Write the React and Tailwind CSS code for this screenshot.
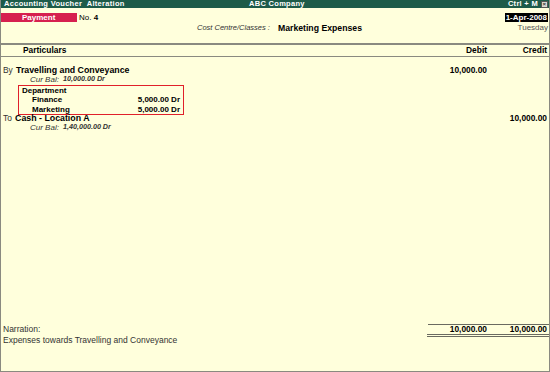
export default function App() {
  const f = { fontFamily: '"Liberation Sans", Arial, sans-serif' };
  return (
    <div style={f} className="w-[550px] h-[372px] bg-[#ffffdc] flex flex-col text-black overflow-hidden border-l border-r border-b border-[#8a8a80]">
      {/* Title bar */}
      <div className="h-[8px] bg-[#1d5b49] flex items-center text-white text-[7.5px] font-bold leading-none tracking-[0.3px] pl-[3px] pr-[1px]">
        <div className="w-[245px]">Accounting Voucher&nbsp; Alteration</div>
        <div className="flex-1">ABC Company</div>
        <div className="mr-[3px]">Ctrl + M</div>
        <div className="w-[7px] h-[7px] bg-[#d8d8d0] border border-[#555] flex items-center justify-center text-[#333] text-[6px] leading-none">×</div>
      </div>
      {/* Header */}
      <div className="flex justify-between mt-[5px] h-[9px]">
        <div className="flex items-center">
          <div className="w-[76px] h-[9px] bg-[#d6204f] text-white text-[8px] font-bold leading-[9px] pl-[21px]">Payment</div>
          <div className="text-[8px] leading-[9px] ml-[2px]">No. <span className="font-bold">4</span></div>
        </div>
        <div className="bg-black text-white text-[8px] font-bold leading-[9px] px-[1px] mr-[1px]">1-Apr-2008</div>
      </div>
      <div className="flex h-[10px] mt-[1px] items-center">
        <div className="w-[196px]" />
        <div className="text-[7.5px] leading-[10px] italic text-[#333]">Cost Centre/Classes :</div>
        <div className="text-[8.7px] leading-[10px] font-bold ml-[8px]">Marketing Expenses</div>
        <div className="flex-1" />
        <div className="text-[8px] leading-[10px] text-[#555] mr-[1px]">Tuesday</div>
      </div>
      {/* header lines */}
      <div className="mt-[10px] h-[2px] bg-[#8a8a80]" />
      <div className="flex h-[11px] items-center text-[8.4px] font-bold">
        <div className="pl-[22px] flex-1">Particulars</div>
        <div className="w-[60px] text-right">Debit</div>
        <div className="w-[62px] text-right pr-[2px]">Credit</div>
      </div>
      <div className="h-[1px] bg-[#8a8a80]" />
      {/* Entries */}
      <div className="mt-[9px] flex flex-col text-[8px]">
        <div className="flex h-[9px] items-center">
          <div className="flex-1 pl-[2px]"><span className="text-[#333] text-[8.4px]">By</span> <span className="font-bold ml-[1px] text-[8.8px]">Travelling and Conveyance</span></div>
          <div className="w-[60px] text-right font-bold text-[8.4px]">10,000.00</div>
          <div className="w-[62px]" />
        </div>
        <div className="flex h-[9px] items-center italic text-[#333] pl-[29px]">
          Cur Bal:<span className="font-bold ml-[4px] text-[7.2px]">10,000.00 Dr</span>
        </div>
        <div className="ml-[17px] mt-[1px] w-[166px] border border-[#e0202a] px-[3px] font-bold">
          <div className="h-[9px] leading-[9px]">Department</div>
          <div className="flex h-[9.5px] leading-[9.5px] pl-[10px]"><div className="flex-1">Finance</div><div>5,000.00 Dr</div></div>
          <div className="flex h-[9.5px] leading-[9.5px] pl-[10px]"><div className="flex-1">Marketing</div><div>5,000.00 Dr</div></div>
        </div>
        <div className="flex h-[9px] items-center -mt-[1px]">
          <div className="flex-1 pl-[2px]"><span className="text-[#333] text-[8.4px]">To</span> <span className="font-bold ml-[1px] text-[8.8px]">Cash - Location A</span></div>
          <div className="w-[60px]" />
          <div className="w-[62px] text-right font-bold pr-[2px] text-[8.4px]">10,000.00</div>
        </div>
        <div className="flex h-[9px] items-center italic text-[#333] pl-[29px]">
          Cur Bal:<span className="font-bold ml-[4px] text-[7.2px]">1,40,000.00 Dr</span>
        </div>
      </div>
      <div className="flex-1" />
      {/* Footer */}
      <div className="flex flex-col mb-[26px] text-[8.5px]">
        <div className="flex">
          <div className="flex-1" />
          <div className="w-[121px] h-[1px] bg-[#6a6a60]" />
        </div>
        <div className="flex h-[9px] items-center">
          <div className="flex-1 pl-[2px] text-[#333]">Narration:</div>
          <div className="w-[60px] text-right font-bold text-[8.4px]">10,000.00</div>
          <div className="w-[62px] text-right font-bold pr-[2px] text-[8.4px]">10,000.00</div>
        </div>
        <div className="flex">
          <div className="flex-1 pl-[2px] text-[#333] leading-[10px] mt-[1px]">Expenses towards Travelling and Conveyance</div>
          <div className="w-[122px] h-[3px] border-t border-b border-[#6a6a60]" />
        </div>
      </div>
    </div>
  );
}
